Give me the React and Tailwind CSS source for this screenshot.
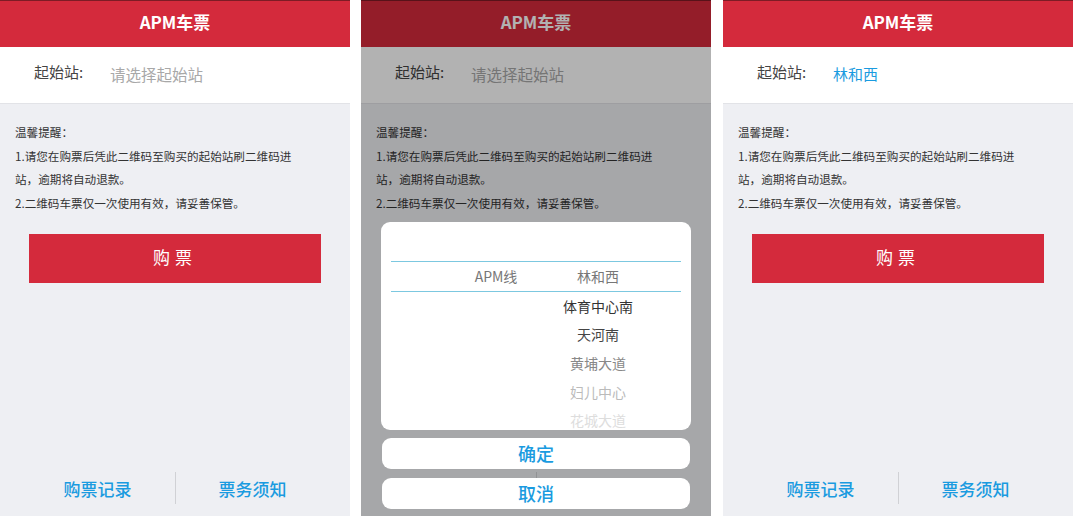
const font = { fontFamily: '"Noto Sans CJK SC", "Noto Sans", sans-serif' };

const notes = [
  "温馨提醒：",
  "1.请您在购票后凭此二维码至购买的起始站刷二维码进",
  "站，逾期将自动退款。",
  "2.二维码车票仅一次使用有效，请妥善保管。",
];

function Screen({ station, children }) {
  return (
    <div className="relative w-[350px] h-[516px] shrink-0 bg-[#eeeff3] flex flex-col overflow-hidden">
      <div className="h-[47px] shrink-0 bg-[#d42a3c] border-t border-[#7e1b25] flex items-center justify-center pb-[5px]">
        <span className="text-white text-[17px] font-bold">APM车票</span>
      </div>

      <div className="h-[57px] shrink-0 bg-white border-b border-[#e2e3e7] flex items-center pl-[34px]">
        <span className="text-[15px] text-[#444] w-[76px] -mt-[5px]">起始站:</span>
        {station ? (
          <span className="text-[15px] text-[#1a9be0] -mt-[1px]">{station}</span>
        ) : (
          <span className="text-[15.5px] text-[#a8a8a8] -mt-[1px]">请选择起始站</span>
        )}
      </div>

      <div className="pl-[15px] pt-[17px] text-[11.6px] leading-[23.5px] text-[#333]">
        {notes.map((n) => (
          <div key={n}>{n}</div>
        ))}
      </div>

      <button className="mx-[29px] mt-[19px] h-[49px] bg-[#d42a3c] text-white text-[17px] tracking-[5px] flex items-center justify-center pb-[3px]">
        购票
      </button>

      <div className="flex-1" />

      <div className="h-[32px] mb-[12px] flex items-center justify-center gap-[43px]">
        <span className="text-[17px] text-[#1a9be0] font-medium mt-[2px]">购票记录</span>
        <div className="w-px h-full bg-[#d0d1d5]" />
        <span className="text-[17px] text-[#1a9be0] font-medium mt-[2px]">票务须知</span>
      </div>

      {children}
    </div>
  );
}

const rows = [
  ["体育中心南", "text-[#333]"],
  ["天河南", "text-[#444]"],
  ["黄埔大道", "text-[#888]"],
  ["妇儿中心", "text-[#bbb]"],
  ["花城大道", "text-[#ddd]"],
];

function PickerSheet() {
  return (
    <>
      <div className="absolute inset-0 bg-black/30" />
      <div className="absolute left-[20px] right-[20px] bottom-[7px] flex flex-col">
        <div className="h-[208px] bg-white rounded-[9px] overflow-hidden pt-[39px] text-[14px]">
          <div className="mx-[10px] h-[31px] border-y border-[#7cc8e0] flex items-center pl-[55px] text-[#777]">
            <span className="w-[100px] text-center">APM线</span>
            <span className="w-[104px] text-center">林和西</span>
          </div>
          {rows.map(([name, color]) => (
            <div key={name} className="h-[28.6px] flex items-center pl-[165px]">
              <span className={`w-[104px] text-center ${color}`}>{name}</span>
            </div>
          ))}
        </div>
        <button className="mt-[8px] mx-px h-[31px] bg-white rounded-[9px] text-[18px] font-medium text-[#1a9be0] flex items-center justify-center">
          确定
        </button>
        <button className="mt-[9px] mx-px h-[31px] bg-white rounded-[9px] text-[18px] font-medium text-[#1a9be0] flex items-center justify-center">
          取消
        </button>
      </div>
    </>
  );
}

export default function App() {
  return (
    <div className="w-[1073px] h-[516px] bg-white flex overflow-hidden" style={font}>
      <Screen />
      <div className="ml-[11px]">
        <Screen>
          <PickerSheet />
        </Screen>
      </div>
      <div className="ml-[12px]">
        <Screen station="林和西" />
      </div>
    </div>
  );
}
